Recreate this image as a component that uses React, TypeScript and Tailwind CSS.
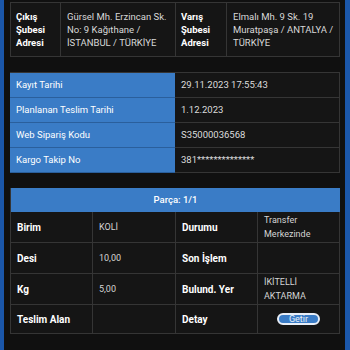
import type { ReactNode } from "react";

const FONT = { fontFamily: "Roboto, 'Noto Sans', sans-serif" };

const DATES: { label: string; value: string }[] = [
  { label: "Kayıt Tarihi", value: "29.11.2023 17:55:43" },
  { label: "Planlanan Teslim Tarihi", value: "1.12.2023" },
  { label: "Web Sipariş Kodu", value: "S35000036568" },
  { label: "Kargo Takip No", value: "381**************" },
];

function Label({ children }: { children: ReactNode }) {
  return (
    <div className="flex items-center border-r border-b border-[#353535] pl-[6px] text-[10px] font-bold text-white">
      {children}
    </div>
  );
}

function Value({ children, last }: { children?: ReactNode; last?: boolean }) {
  return (
    <div
      className={
        "flex items-center border-b border-[#353535] pl-[6px] text-[9px] leading-[14px] text-[#d4d4d4] " +
        (last ? "border-r" : "border-r")
      }
    >
      <div>{children}</div>
    </div>
  );
}

export default function App() {
  return (
    <div className="flex h-[350px] w-[350px] overflow-hidden bg-[#1b57aa]" style={FONT}>
      <div className="ml-[4px] mr-[5px] flex-1 bg-[#101010] pl-[6px] pr-[5px]">
        {/* branch addresses */}
        <div className="mt-[2px] grid h-[55px] grid-cols-[50px_115px_51px_1fr] border border-[#353535] bg-[#151515] text-[9.5px] leading-[13px]">
          <div className="flex items-center border-r border-[#353535] pl-[5px] font-bold text-white">
            <div>
              Çıkış
              <br />
              Şubesi
              <br />
              Adresi
            </div>
          </div>
          <div className="flex items-center border-r border-[#353535] pl-[6px] text-[#d8d8d8]">
            <div>
              Gürsel Mh. Erzincan Sk.
              <br />
              No: 9 Kağıthane /
              <br />
              İSTANBUL / TÜRKİYE
            </div>
          </div>
          <div className="flex items-center border-r border-[#353535] pl-[5px] font-bold text-white">
            <div>
              Varış
              <br />
              Şubesi
              <br />
              Adresi
            </div>
          </div>
          <div className="flex items-center pl-[6px] text-[#d8d8d8]">
            <div>
              Elmalı Mh. 9 Sk. 19
              <br />
              Muratpaşa / ANTALYA /
              <br />
              TÜRKİYE
            </div>
          </div>
        </div>

        {/* dates & codes */}
        <div className="mt-[15px] grid grid-cols-[165px_1fr] border-t border-[#353535] text-[9.5px]">
          {DATES.map((d) => (
            <div key={d.label} className="contents">
              <div className="flex h-[25px] items-center border-b border-[#2a5f9c] bg-[#3a7cc6] pl-[6px] text-white">
                {d.label}
              </div>
              <div className="flex h-[25px] items-center border-r border-b border-[#353535] bg-[#151515] pl-[6px] text-[#dcdcdc]">
                {d.value}
              </div>
            </div>
          ))}
        </div>

        {/* piece */}
        <div className="mt-[15px] border-l border-[#353535] bg-[#151515]">
          <div className="flex h-[24px] items-center justify-center bg-[#3a7cc6] text-[9.5px] font-medium text-white">
            Parça: 1/1
          </div>
          <div className="grid grid-cols-[82px_83px_82px_1fr] grid-rows-[31px_31px_31px_29px]">
            <Label>Birim</Label>
            <Value>KOLİ</Value>
            <Label>Durumu</Label>
            <Value last>
              Transfer
              <br />
              Merkezinde
            </Value>

            <Label>Desi</Label>
            <Value>10,00</Value>
            <Label>Son İşlem</Label>
            <Value last />

            <Label>Kg</Label>
            <Value>5,00</Value>
            <Label>Bulund. Yer</Label>
            <Value last>
              İKİTELLİ
              <br />
              AKTARMA
            </Value>

            <Label>Teslim Alan</Label>
            <Value />
            <Label>Detay</Label>
            <div className="flex items-center justify-center border-r border-b border-[#353535]">
              <button
                type="button"
                className="flex h-[12px] w-[43px] items-center justify-center rounded-full border-2 border-[#e8eef7] bg-[#3a7cc6] text-[9px] leading-none text-[#e8eef7]"
              >
                Getir
              </button>
            </div>
          </div>
        </div>
      </div>
    </div>
  );
}
